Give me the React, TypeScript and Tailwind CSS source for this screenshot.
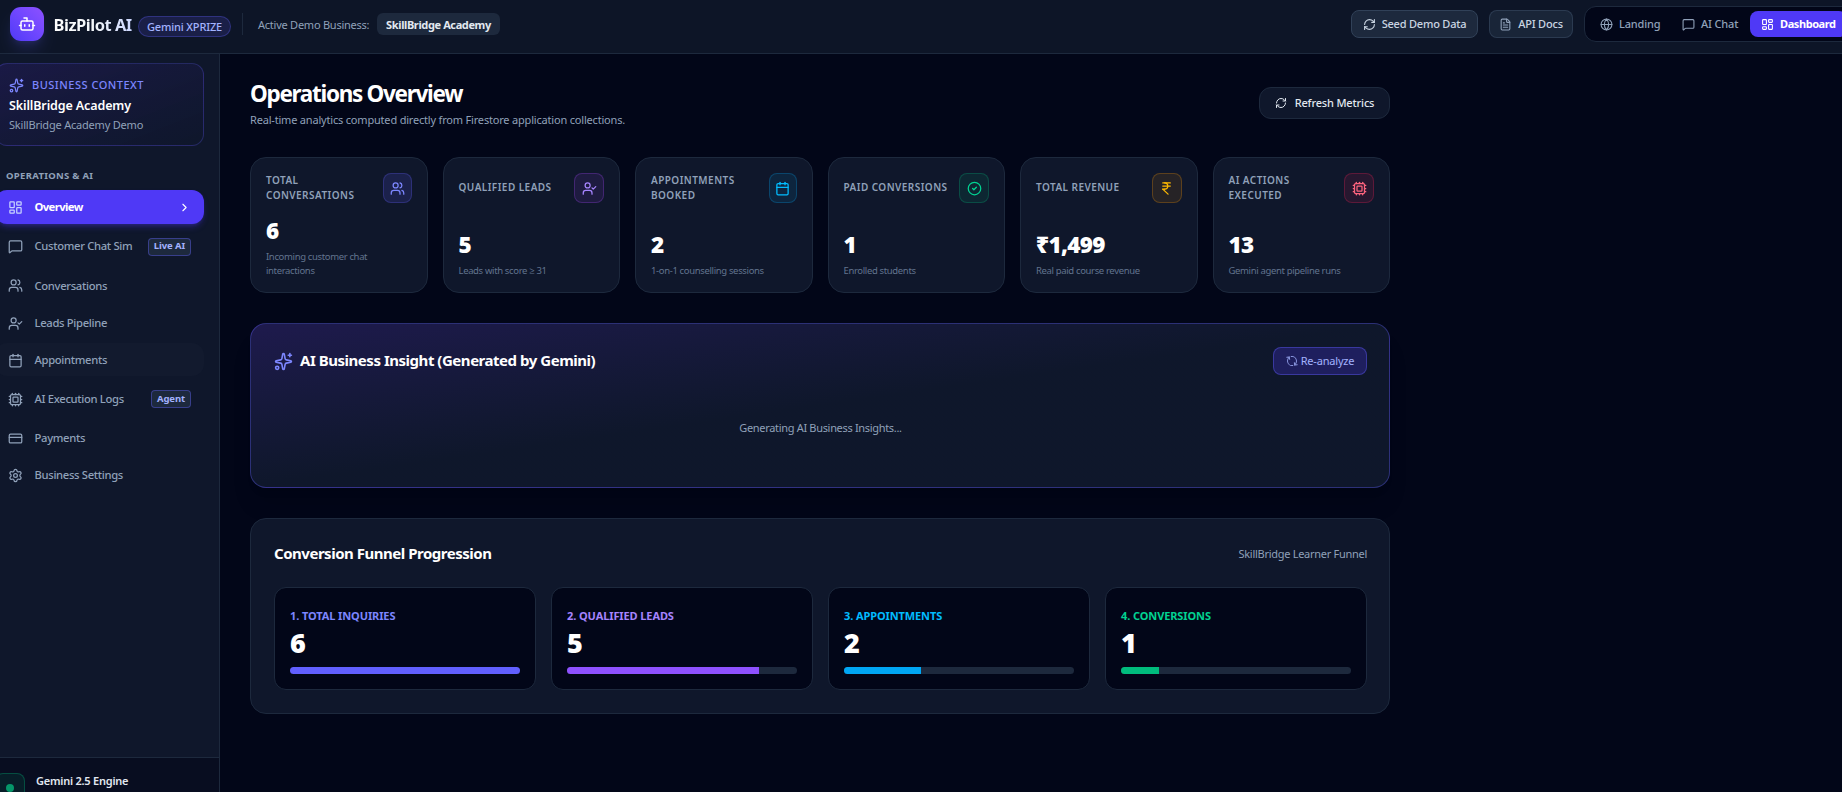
import clsx from "clsx";
import {
  Bot,
  Calendar,
  ChevronRight,
  CircleCheck,
  Cpu,
  CreditCard,
  FileText,
  Globe,
  IndianRupee,
  LayoutDashboard,
  MessageSquare,
  RefreshCw,
  Settings,
  Sparkles,
  UserCheck,
  Users,
  type LucideIcon,
} from "lucide-react";

type NavItem = { label: string; icon: LucideIcon; badge?: string; active?: boolean; hover?: boolean };

const NAV: NavItem[] = [
  { label: "Overview", icon: LayoutDashboard, active: true },
  { label: "Customer Chat Sim", icon: MessageSquare, badge: "Live AI" },
  { label: "Conversations", icon: Users },
  { label: "Leads Pipeline", icon: UserCheck },
  { label: "Appointments", icon: Calendar, hover: true },
  { label: "AI Execution Logs", icon: Cpu, badge: "Agent" },
  { label: "Payments", icon: CreditCard },
  { label: "Business Settings", icon: Settings },
];

const METRICS = [
  { label: "Total Conversations", value: "6", note: "Incoming customer chat interactions", icon: Users, tone: "w-[29px] text-indigo-400 bg-indigo-500/15 border-indigo-500/25", wrap: "w-[95px]" },
  { label: "Qualified Leads", value: "5", note: "Leads with score ≥ 31", icon: UserCheck, tone: "w-[30px] text-violet-400 bg-purple-500/10 border-purple-500/25", wrap: "-mt-[2px]" },
  { label: "Appointments Booked", value: "2", note: "1-on-1 counselling sessions", icon: Calendar, tone: "w-[28px] text-sky-400 bg-sky-500/10 border-sky-500/25", wrap: "w-[90px]" },
  { label: "Paid Conversions", value: "1", note: "Enrolled students", icon: CircleCheck, tone: "w-[30px] text-emerald-400 bg-emerald-500/10 border-emerald-500/25", wrap: "-mt-[2px]" },
  { label: "Total Revenue", value: "₹1,499", note: "Real paid course revenue", icon: IndianRupee, tone: "w-[30px] text-amber-400 bg-amber-500/10 border-amber-500/25", wrap: "-mt-[2px]" },
  { label: "AI Actions Executed", value: "13", note: "Gemini agent pipeline runs", icon: Cpu, tone: "w-[30px] text-rose-400 bg-rose-500/10 border-rose-500/25", wrap: "w-[80px]" },
];

const FUNNEL = [
  { label: "1. TOTAL INQUIRIES", value: 6, text: "text-indigo-400", bar: "bg-indigo-500" },
  { label: "2. QUALIFIED LEADS", value: 5, text: "text-violet-400", bar: "bg-violet-500" },
  { label: "3. APPOINTMENTS", value: 2, text: "text-sky-400", bar: "bg-sky-500" },
  { label: "4. CONVERSIONS", value: 1, text: "text-emerald-400", bar: "bg-emerald-500" },
];

function Header() {
  return (
    <header className="flex h-[54px] w-[1862px] shrink-0 items-start border-b border-slate-800 bg-[#0d1527] pl-[10px]">
      <div className="mt-[7px] grid size-[34px] place-items-center rounded-[11px] bg-linear-to-tr from-indigo-600 to-violet-500 text-white shadow-lg shadow-indigo-500/20">
        <Bot size={18} />
      </div>
      <span className="mt-[13px] ml-[9.5px] w-[84.5px] bg-linear-to-r from-white via-slate-100 to-indigo-200 bg-clip-text text-[16.5px] leading-6 font-bold tracking-[-0.5px] whitespace-nowrap text-transparent">
        BizPilot AI
      </span>
      <span className="mt-4 grid h-[21px] w-[93px] place-items-center rounded-full border border-indigo-500/30 bg-indigo-500/15 pt-px text-[11px] font-medium tracking-[-0.15px] whitespace-nowrap text-indigo-300">
        Gemini XPRIZE
      </span>
      <div className="mt-[13px] ml-[11px] h-[22px] w-px bg-slate-800" />
      <span className="mt-[13px] ml-[15px] w-[119px] text-[11px] leading-[24px] tracking-[-0.24px] whitespace-nowrap text-slate-400">
        Active Demo Business:
      </span>
      <span className="mt-[13px] grid h-[22px] w-[123px] place-items-center rounded-md bg-slate-800 pt-[2px] text-[11px] font-bold tracking-[-0.38px] whitespace-nowrap text-slate-200">
        SkillBridge Academy
      </span>

      <button className="mt-[10px] ml-[851px] flex h-[28px] w-[127px] items-center justify-center gap-[6px] rounded-lg border border-slate-700 bg-slate-800 pt-px text-[11px] font-medium tracking-[-0.2px] text-slate-300">
        <RefreshCw size={13} />
        Seed Demo Data
      </button>
      <button className="mt-[10px] ml-[11px] flex h-[28px] w-[84px] items-center justify-center gap-[6px] rounded-lg border border-slate-700/80 bg-slate-800/80 pt-px text-[11px] font-medium tracking-[-0.2px] text-slate-300">
        <FileText size={13} className="text-slate-400" />
        API Docs
      </button>
      <div className="mt-[6px] ml-[11px] flex h-9 w-[277px] shrink-0 items-center rounded-xl border border-slate-800 bg-slate-950 pl-[15px] text-[11px] font-medium tracking-[-0.15px] text-slate-400">
        <button className="flex w-[82px] items-center gap-[6px] pt-px">
          <Globe size={13} />
          Landing
        </button>
        <button className="flex w-[68px] items-center gap-[6px] pt-px whitespace-nowrap">
          <MessageSquare size={13} />
          AI Chat
        </button>
        <button className="flex h-[26px] w-[97px] items-center gap-[6px] rounded-lg bg-indigo-600 pt-px pl-[11px] font-bold tracking-[-0.42px] text-white">
          <LayoutDashboard size={13} />
          Dashboard
        </button>
      </div>
    </header>
  );
}

function Sidebar() {
  return (
    <aside className="flex w-[220px] shrink-0 flex-col border-r border-slate-800 bg-slate-900">
      <div className="-ml-[5px] flex w-[209px] flex-1 flex-col pt-[9px]">
        <div className="h-[83px] rounded-xl border border-indigo-500/25 bg-linear-to-br from-indigo-950/80 to-slate-900 pt-[13px] pl-[13px]">
          <div className="flex h-4 items-center gap-2 text-[11px] font-medium tracking-[0.5px] text-indigo-400">
            <Sparkles size={15} />
            BUSINESS CONTEXT
          </div>
          <div className="mt-[3px] text-[12.5px] leading-[19px] font-semibold tracking-[-0.12px] text-white">SkillBridge Academy</div>
          <div className="mt-[1px] text-[11px] leading-[18px] tracking-[-0.2px] text-slate-400">SkillBridge Academy Demo</div>
        </div>

        <div className="mt-[22px] pl-[11px] text-[9.5px] leading-[16px] font-bold tracking-[0.3px] text-slate-400">OPERATIONS &amp; AI</div>
        <nav className="mt-[6px] flex flex-col gap-[3.6px]">
          {NAV.map((n) => (
            <button
              key={n.label}
              className={clsx(
                "flex items-center rounded-xl pt-px pr-[13px] pl-[13px] text-[11.25px]",
                n.badge ? "h-[38px]" : "h-[33.5px]",
                n.active
                  ? "bg-indigo-600 font-bold tracking-[-0.6px] text-white shadow-md shadow-indigo-600/30"
                  : "font-medium tracking-[-0.33px] text-slate-400",
                n.hover && "bg-slate-800/20 text-slate-300",
              )}
            >
              <n.icon size={15} className={n.active ? "text-indigo-200" : "text-slate-400"} />
              <span className="ml-[11.5px] flex-1 text-left whitespace-nowrap">{n.label}</span>
              {n.active && <ChevronRight size={13} />}
              {n.badge && (
                <span className="flex h-[18px] items-center rounded border border-indigo-500/40 bg-slate-800 px-[5px] text-[9.5px] font-bold tracking-[-0.1px] text-indigo-300">
                  {n.badge}
                </span>
              )}
            </button>
          ))}
        </nav>
      </div>
      <div className="flex h-[35px] shrink-0 items-start overflow-hidden border-t border-slate-800 bg-[#080d20] pt-[15px]">
        <div className="-ml-[5px] grid h-[30px] w-[30px] shrink-0 place-items-center rounded-lg border border-emerald-500/30 bg-emerald-500/10">
          <span className="size-2 rounded-full bg-[#059669]" />
        </div>
        <span className="-mt-px ml-[11px] text-[11px] leading-[17px] font-semibold tracking-[-0.23px] whitespace-nowrap text-slate-200">
          Gemini 2.5 Engine
        </span>
      </div>
    </aside>
  );
}

function MetricCard({ m }: { m: (typeof METRICS)[number] }) {
  return (
    <div className="flex h-[136px] flex-col justify-between rounded-2xl border border-slate-800 bg-slate-900 px-[15px] pt-[15px] pb-[14px]">
      <div className="flex items-center justify-between">
        <span className={clsx("text-[10px] leading-[15px] font-semibold tracking-[0.45px] text-slate-400 uppercase", m.wrap)}>
          {m.label}
        </span>
        <span className={clsx("grid h-[30px] shrink-0 place-items-center rounded-lg border", m.tone)}>
          <m.icon size={15} />
        </span>
      </div>
      <div>
        <div className="text-[22.5px] leading-[30px] font-black tracking-[-0.7px] text-white">{m.value}</div>
        <div className="mt-[4px] w-[130px] text-[9.5px] leading-[14px] tracking-[-0.35px] text-slate-500">{m.note}</div>
      </div>
    </div>
  );
}

export default function App() {
  return (
    <div className="flex h-[792px] w-[1842px] flex-col overflow-hidden bg-slate-950 font-['Noto_Sans','Open_Sans',sans-serif]">
      <Header />
      <div className="flex min-h-0 flex-1">
        <Sidebar />
        <main className="ml-[30px] w-[1140px] pt-[25px]">
          <div className="flex h-[78px] items-start justify-between">
            <div>
              <h1 className="text-[22.5px] leading-[30px] font-bold tracking-[-1.3px] text-white">Operations Overview</h1>
              <p className="mt-[2px] text-[11px] leading-[18px] tracking-[-0.19px] text-slate-400">
                Real-time analytics computed directly from Firestore application collections.
              </p>
            </div>
            <button className="mt-[8px] flex h-8 w-[131px] items-center justify-center gap-2 rounded-xl border border-slate-800 bg-slate-900 text-[11px] font-medium tracking-[-0.16px] text-slate-200">
              <RefreshCw size={12} />
              Refresh Metrics
            </button>
          </div>

          <div className="grid grid-cols-6 gap-[15px]">
            {METRICS.map((m) => (
              <MetricCard key={m.label} m={m} />
            ))}
          </div>

          <section className="mt-[30px] h-[165px] rounded-2xl border border-indigo-500/35 bg-linear-to-br from-[#1e1a4d] via-slate-900 to-slate-900 pt-[23px] pr-[22px] pl-[23px] shadow-xl">
            <div className="flex h-7 items-center justify-between">
              <div className="flex items-center gap-[7px]">
                <Sparkles size={19} className="text-indigo-400" />
                <h2 className="-mt-[2px] text-[15px] font-bold tracking-[-0.47px] text-white">AI Business Insight (Generated by Gemini)</h2>
              </div>
              <button className="flex h-[28px] w-[94px] items-center justify-center gap-[3px] rounded-lg border border-indigo-500/40 bg-indigo-600/25 text-[11px] tracking-[-0.2px] text-indigo-300">
                <RefreshCw size={12} className="-rotate-[100deg] opacity-80" />
                Re-analyze
              </button>
            </div>
            <p className="mt-[44px] text-center text-[11px] leading-[18px] tracking-[-0.32px] text-slate-400">Generating AI Business Insights...</p>
          </section>

          <section className="mt-[30px] h-[196px] rounded-2xl border border-slate-800 bg-slate-900 pt-[23px] pr-[22px] pl-[23px]">
            <div className="flex h-6 items-center justify-between">
              <h2 className="-mt-[2px] text-[15px] font-bold tracking-[-0.48px] text-white">Conversion Funnel Progression</h2>
              <span className="text-[11px] tracking-[-0.28px] text-slate-400">SkillBridge Learner Funnel</span>
            </div>
            <div className="mt-[21px] grid grid-cols-4 gap-[15px]">
              {FUNNEL.map((f) => (
                <div key={f.label} className="h-[103px] rounded-xl border border-slate-800 bg-slate-950 px-[15px] pt-[19px]">
                  <div className={clsx("text-[11px] leading-[17px] font-bold tracking-[-0.1px]", f.text)}>{f.label}</div>
                  <div className="mt-[2px] text-[27px] leading-[34px] font-black text-white">{f.value}</div>
                  <div className="mt-[7px] h-[7px] overflow-hidden rounded-full bg-slate-800">
                    <div className={clsx("h-full", f.bar)} style={{ width: `${(f.value / 6) * 100}%` }} />
                  </div>
                </div>
              ))}
            </div>
          </section>
        </main>
      </div>
    </div>
  );
}
